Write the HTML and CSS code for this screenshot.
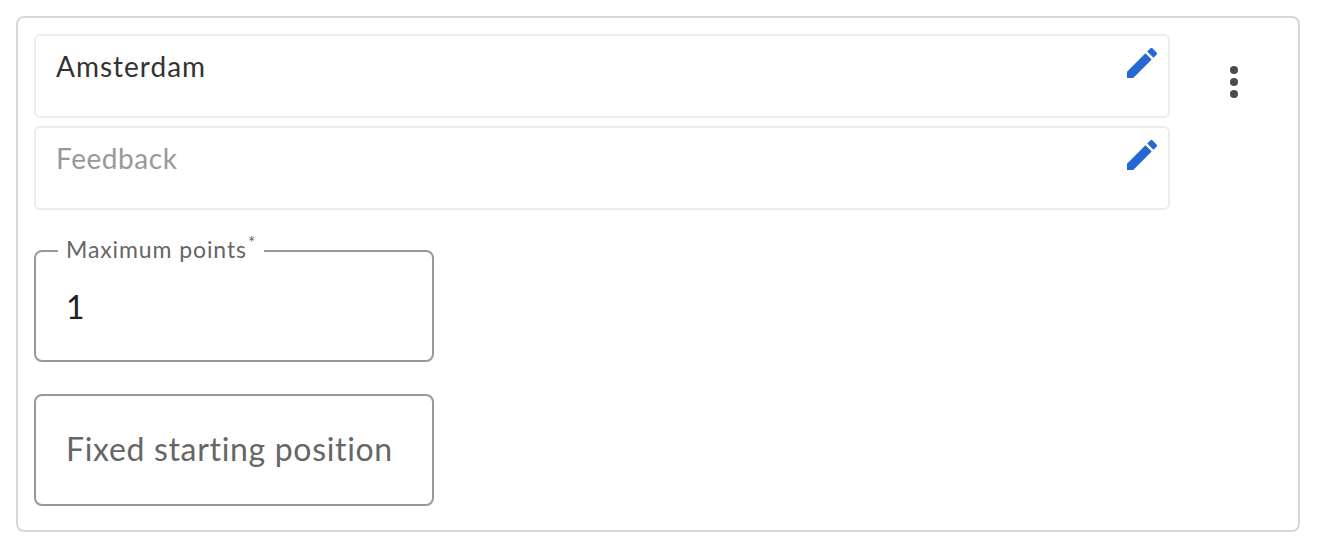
FILE: index.html
```html
<!DOCTYPE html>
<html lang="en">
<head>
<meta charset="utf-8">
<title>Amsterdam</title>
<link rel="stylesheet" href="styles.css">
</head>
<body>
<section class="card">
  <div class="top">
    <div class="editors">
      <div class="editor">
        <span class="value">Amsterdam</span>
        <svg class="pencil" viewBox="0 0 24 24"><path d="M3 17.25V21h3.75L17.81 9.94l-3.75-3.75L3 17.25zM20.71 7.04c.39-.39.39-1.02 0-1.41l-2.34-2.34c-.39-.39-1.02-.39-1.41 0l-1.83 1.83 3.75 3.75 1.83-1.83z"/></svg>
      </div>
      <div class="editor">
        <span class="placeholder">Feedback</span>
        <svg class="pencil" viewBox="0 0 24 24"><path d="M3 17.25V21h3.75L17.81 9.94l-3.75-3.75L3 17.25zM20.71 7.04c.39-.39.39-1.02 0-1.41l-2.34-2.34c-.39-.39-1.02-.39-1.41 0l-1.83 1.83 3.75 3.75 1.83-1.83z"/></svg>
      </div>
    </div>
    <svg class="more" viewBox="0 0 24 24"><circle cx="12" cy="6" r="2"/><circle cx="12" cy="12" r="2"/><circle cx="12" cy="18" r="2"/></svg>
  </div>
  <fieldset class="points">
    <legend class="points-label">Maximum points<sup class="req">*</sup></legend>
    <span class="points-value">1</span>
  </fieldset>
  <div class="fixed">Fixed starting position</div>
</section>
</body>
</html>
```
FILE: styles.css
```css
* { box-sizing: border-box; }
html, body { margin: 0; background: #fff; }
body {
  padding: 16px 18px 0 16px;
  font-family: "Lato", "Open Sans", sans-serif;
}
.card {
  border: 2px solid #d4d8db;
  border-radius: 8px;
  padding: 16px 16px 24px;
  height: 516px;
}
.top { display: flex; align-items: flex-start; gap: 40px; }
.editors { width: 1136px; display: flex; flex-direction: column; gap: 8px; }
.editor {
  height: 84px;
  border: 2px solid #ececec;
  border-radius: 6px;
  padding: 12px 6px 0 20px;
  display: flex;
  justify-content: space-between;
  align-items: flex-start;
  font-size: 28px;
  line-height: 36px;
}
.value { color: #333; letter-spacing: 1px; }
.placeholder { color: #999; letter-spacing: 0.55px; }
.pencil { width: 40px; height: 40px; margin-top: -5px; fill: #2568d3; flex: none; }
.more { width: 48px; height: 48px; margin-top: 24px; fill: #4a4a4a; flex: none; }
.points {
  margin: 33px 0 0;
  padding: 0 30px;
  width: 400px;
  height: 119px;
  border: 2px solid #999;
  border-radius: 8px;
  min-width: 0;
}
.points-label {
  padding: 0 8px;
  margin-left: -8px;
  font-size: 23px;
  line-height: 12px;
  letter-spacing: 0.9px;
  color: #666;
  height: 16px;
}
.req { font-size: 17px; line-height: 0; margin-left: 1px; }
.points-value { display: block; margin-top: 28px; font-size: 32px; line-height: 40px; color: #222; }
.fixed {
  margin-top: 32px;
  width: 400px;
  height: 112px;
  border: 2px solid #999;
  border-radius: 8px;
  padding: 0 30px 4px;
  display: flex;
  align-items: center;
  font-size: 32px;
  letter-spacing: 0.67px;
  color: #666;
}
```
